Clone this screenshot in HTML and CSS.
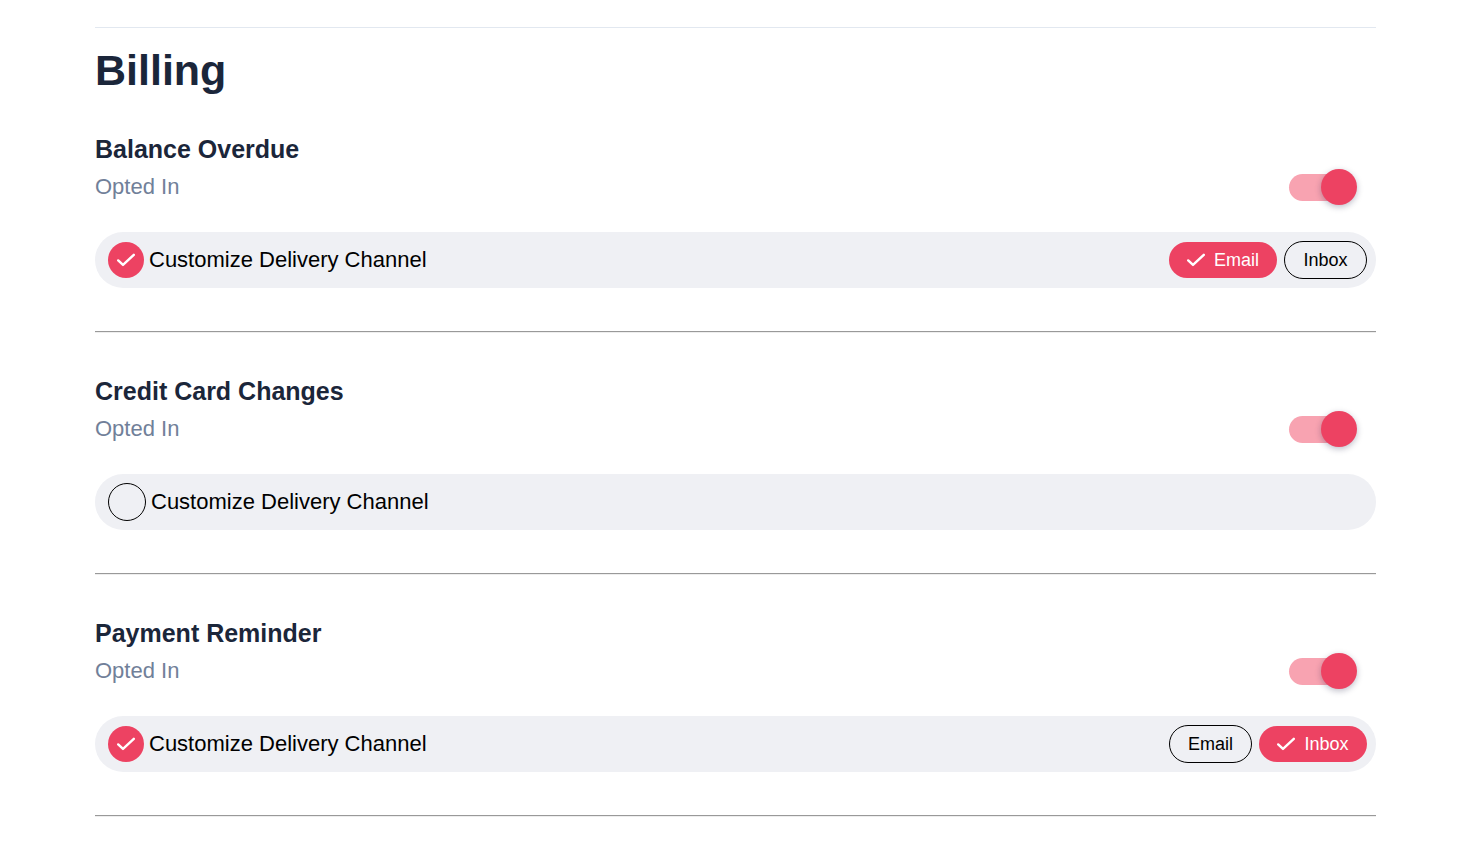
FILE: index.html
```
<!DOCTYPE html>
<html lang="en">
<head>
<meta charset="utf-8">
<meta name="viewport" content="width=device-width, initial-scale=1">
<title>Billing notifications</title>
<link rel="stylesheet" href="styles.css">
</head>
<body>
<main class="preferences">
  <h1 class="page-title">Billing</h1>

  <section class="topic">
    <h2 class="topic-title">Balance Overdue</h2>
    <div class="topic-status">
      <label for="overdue-opt">Opted In</label>
      <input class="switch" type="checkbox" role="switch" id="overdue-opt" checked>
    </div>
    <div class="delivery">
      <label class="customize">
        <span class="tick">
          <input class="tick-box" type="checkbox" checked>
          <svg class="check" viewBox="0 0 18 14" aria-hidden="true"><path d="M1.2 7.4 6 11.9 16.8 1.8"/></svg>
        </span>
        Customize Delivery Channel
      </label>
      <div class="channels">
        <button class="chip chip-on" type="button" aria-pressed="true">
          <svg class="check" viewBox="0 0 18 14" aria-hidden="true"><path d="M1.2 7.4 6 11.9 16.8 1.8"/></svg>
          <span class="chip-text">Email</span>
        </button>
        <button class="chip" type="button" aria-pressed="false"><span class="chip-text">Inbox</span></button>
      </div>
    </div>
  </section>
  <hr class="divider">

  <section class="topic">
    <h2 class="topic-title">Credit Card Changes</h2>
    <div class="topic-status">
      <label for="card-opt">Opted In</label>
      <input class="switch" type="checkbox" role="switch" id="card-opt" checked>
    </div>
    <div class="delivery">
      <label class="customize">
        <span class="tick">
          <input class="tick-box" type="checkbox">
        </span>
        Customize Delivery Channel
      </label>
    </div>
  </section>
  <hr class="divider">

  <section class="topic">
    <h2 class="topic-title">Payment Reminder</h2>
    <div class="topic-status">
      <label for="reminder-opt">Opted In</label>
      <input class="switch" type="checkbox" role="switch" id="reminder-opt" checked>
    </div>
    <div class="delivery">
      <label class="customize">
        <span class="tick">
          <input class="tick-box" type="checkbox" checked>
          <svg class="check" viewBox="0 0 18 14" aria-hidden="true"><path d="M1.2 7.4 6 11.9 16.8 1.8"/></svg>
        </span>
        Customize Delivery Channel
      </label>
      <div class="channels">
        <button class="chip" type="button" aria-pressed="false"><span class="chip-text">Email</span></button>
        <button class="chip chip-on" type="button" aria-pressed="true">
          <svg class="check" viewBox="0 0 18 14" aria-hidden="true"><path d="M1.2 7.4 6 11.9 16.8 1.8"/></svg>
          <span class="chip-text">Inbox</span>
        </button>
      </div>
    </div>
  </section>
  <hr class="divider">
</main>
</body>
</html>
```
FILE: styles.css
```
* {
  box-sizing: border-box;
}

body {
  margin: 0;
  background: #fff;
  color: #000;
  font-family: "Liberation Sans", Arial, sans-serif;
}

.preferences {
  margin: 27px 90px 0 95px;
  border-top: 1px solid #e2e8f0;
}

.page-title {
  margin: 16px 0 38px;
  color: #1b263a;
  font-size: 43px;
  line-height: 52px;
}

.topic-title {
  margin: 0 0 5px;
  color: #1b263a;
  font-size: 25px;
  line-height: 30px;
}

.topic-status {
  display: flex;
  align-items: center;
  justify-content: space-between;
  padding-right: 19px;
  color: #718099;
  font-size: 22px;
}

.switch {
  appearance: none;
  display: grid;
  align-items: center;
  width: 68px;
  height: 36px;
  margin: 0;
  cursor: pointer;
}

.switch::before,
.switch::after {
  content: "";
  grid-area: 1 / 1;
}

.switch::before {
  width: 64px;
  height: 27px;
  border-radius: 14px;
  background: #f8a3b1;
}

.switch::after {
  width: 36px;
  height: 36px;
  border-radius: 50%;
  background: #ed4262;
  box-shadow: 0 2px 6px rgba(20, 20, 60, 0.28);
}

.switch:checked::after {
  justify-self: end;
}

.delivery {
  display: flex;
  align-items: center;
  justify-content: space-between;
  min-height: 56px;
  margin-top: 27px;
  padding: 0 9px 0 13px;
  border-radius: 28px;
  background: #eff0f4;
}

.customize {
  display: flex;
  align-items: center;
  gap: 5px;
  font-size: 22px;
  cursor: pointer;
}

.tick {
  display: grid;
  place-items: center;
}

.tick > * {
  grid-area: 1 / 1;
}

.tick-box {
  appearance: none;
  width: 38px;
  height: 38px;
  margin: 0;
  border: 1px solid #000;
  border-radius: 50%;
}

.tick-box:checked {
  width: 36px;
  height: 36px;
  border: 0;
  background: #ed4262;
}

.check {
  width: 18px;
  height: 14px;
  fill: none;
  stroke: #fff;
  stroke-width: 2.4;
  stroke-linecap: round;
  stroke-linejoin: round;
  pointer-events: none;
}

.channels {
  display: flex;
  align-items: center;
  gap: 7px;
}

.chip {
  display: flex;
  align-items: center;
  gap: 9px;
  height: 38px;
  padding: 0 18px;
  border: 1px solid #000;
  border-radius: 19px;
  background: transparent;
  color: #000;
  font: 18px "Liberation Sans", Arial, sans-serif;
  cursor: pointer;
}

.chip-on {
  height: 36px;
  border: 0;
  background: #ed4262;
  color: #fff;
}

.chip-text {
  min-width: 45px;
}

.divider {
  margin: 43px 0;
  border: 0;
  border-top: 1px solid #999;
  border-bottom: 1px solid #eee;
}
```
